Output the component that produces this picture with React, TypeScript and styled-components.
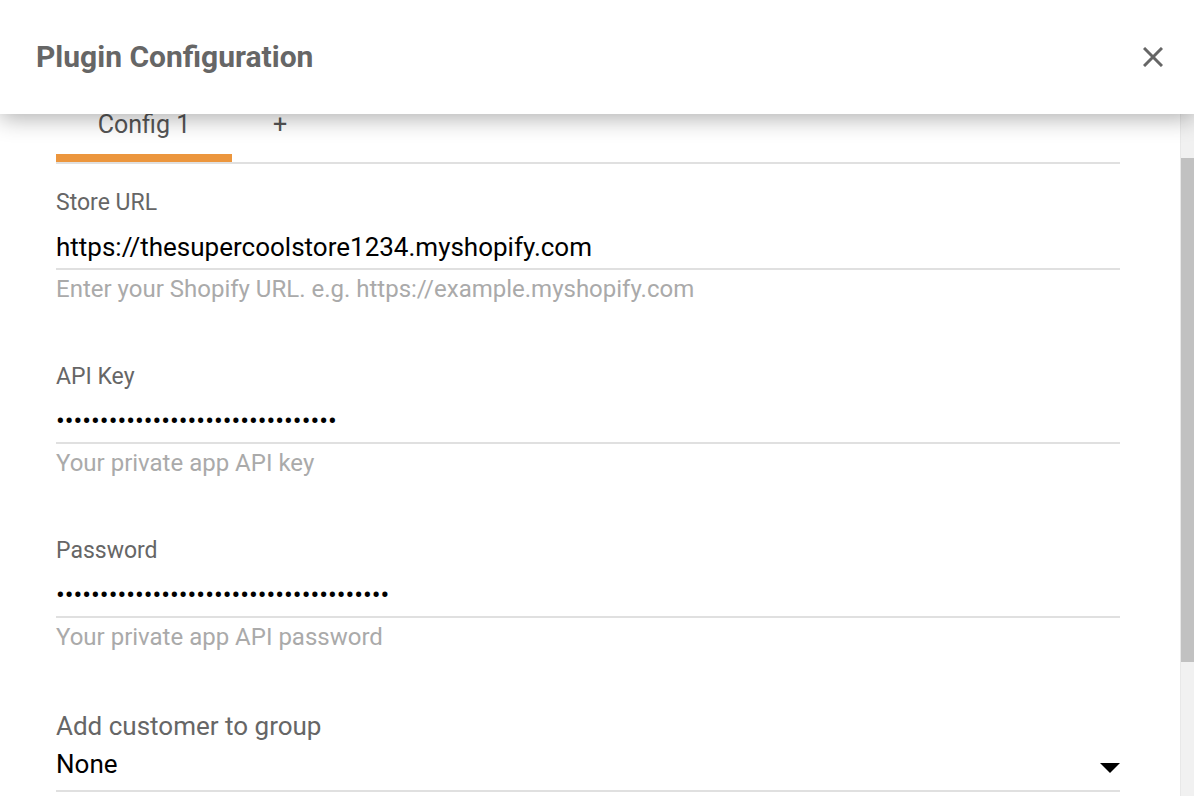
import { useLayoutEffect, useRef } from 'react';
import styled, { createGlobalStyle } from 'styled-components';

const GlobalStyle = createGlobalStyle`
  html, body {
    margin: 0;
    padding: 0;
    background: #ffffff;
    font-family: Roboto, "Liberation Sans", Arial, sans-serif;
  }
`;

const Dialog = styled.div`
  display: flex;
  flex-direction: column;
  height: 100vh;
  overflow: hidden;
  background: #ffffff;
`;

const Header = styled.header`
  position: relative;
  z-index: 1;
  flex: 0 0 114px;
  display: flex;
  align-items: center;
  justify-content: space-between;
  padding: 0 31px 0 36px;
  background: #ffffff;
  box-shadow: 0 4px 22px rgba(0, 0, 0, 0.32);
`;

const Title = styled.h1`
  margin: 0 0 2px;
  font-size: 30px;
  font-weight: 700;
  color: #666666;
`;

const CloseButton = styled.button`
  display: flex;
  align-items: center;
  justify-content: center;
  width: 20px;
  height: 20px;
  padding: 0;
  border: none;
  background: none;
  cursor: pointer;
`;

const BodyRow = styled.div`
  flex: 1;
  display: flex;
  min-height: 0;
`;

const Body = styled.div`
  flex: 1;
  overflow-y: scroll;
  scrollbar-width: none;
  padding: 40px 60px 186px 56px;

  &::-webkit-scrollbar {
    display: none;
  }
`;

const ScrollTrack = styled.div`
  flex: 0 0 14px;
  box-sizing: border-box;
  padding-top: 44px;
  background: #f1f1f1;
  border-left: 1px solid #e8e8e8;
`;

const ScrollThumb = styled.div`
  height: 504px;
  background: #c1c1c1;
`;

const TabRow = styled.div`
  display: flex;
  border-bottom: 2px solid #e0e0e0;
`;

const Tab = styled.button<{ $active?: boolean; $width: number }>`
  display: flex;
  align-items: center;
  justify-content: center;
  width: ${(p) => p.$width}px;
  height: 68px;
  padding: 0;
  border: none;
  border-bottom: 8px solid ${(p) => (p.$active ? '#ec963d' : 'transparent')};
  background: none;
  font-family: inherit;
  font-size: 25px;
  color: #555555;
  cursor: pointer;
`;

const Field = styled.div`
  display: flex;
  flex-direction: column;
  margin-top: 27px;

  & + & {
    margin-top: 64px;
  }
`;

const Label = styled.label<{ $large?: boolean }>`
  font-size: ${(p) => (p.$large ? 26 : 23)}px;
  line-height: ${(p) => (p.$large ? 26 : 24)}px;
  color: #666666;
`;

const Input = styled.input`
  box-sizing: border-box;
  width: 100%;
  height: 40px;
  margin-top: 15px;
  padding: 0 0 4px;
  border: none;
  border-bottom: 2px solid #e0e0e0;
  outline: none;
  background: transparent;
  font-family: inherit;
  font-size: 26px;
  color: #000000;
`;

const Helper = styled.div`
  margin-top: 7px;
  font-size: 24px;
  line-height: 24px;
  color: #aaaaaa;
`;

const Select = styled.div`
  box-sizing: border-box;
  display: flex;
  align-items: center;
  justify-content: space-between;
  height: 46px;
  margin-top: 7px;
  padding-bottom: 8px;
  border-bottom: 2px solid #e0e0e0;
  font-size: 26px;
  color: #000000;
  cursor: pointer;
`;

const Caret = styled.span`
  width: 0;
  height: 0;
  margin-top: 8px;
  border-left: 10px solid transparent;
  border-right: 10px solid transparent;
  border-top: 10px solid #000000;
`;

const fields = [
  {
    label: 'Store URL',
    value: 'https://thesupercoolstore1234.myshopify.com',
    helper: 'Enter your Shopify URL. e.g. https://example.myshopify.com',
  },
  { label: 'API Key', value: '•'.repeat(32), helper: 'Your private app API key' },
  { label: 'Password', value: '•'.repeat(38), helper: 'Your private app API password' },
];

export default function App() {
  const bodyRef = useRef<HTMLDivElement>(null);

  useLayoutEffect(() => {
    if (bodyRef.current) bodyRef.current.scrollTop = 60;
  }, []);

  return (
    <>
      <GlobalStyle />
      <Dialog>
        <Header>
          <Title>Plugin Configuration</Title>
          <CloseButton aria-label="Close">
            <svg width="20" height="20" viewBox="0 0 20 20">
              <path d="M1 1L19 19M19 1L1 19" stroke="#666666" strokeWidth="3" />
            </svg>
          </CloseButton>
        </Header>
        <BodyRow>
          <Body ref={bodyRef}>
            <TabRow>
              <Tab $active $width={176}>Config 1</Tab>
              <Tab $width={96}>+</Tab>
            </TabRow>
            {fields.map((f) => (
              <Field key={f.label}>
                <Label>{f.label}</Label>
                <Input readOnly value={f.value} />
                <Helper>{f.helper}</Helper>
              </Field>
            ))}
            <Field>
              <Label $large>Add customer to group</Label>
              <Select>
                <span>None</span>
                <Caret />
              </Select>
            </Field>
          </Body>
          <ScrollTrack>
            <ScrollThumb />
          </ScrollTrack>
        </BodyRow>
      </Dialog>
    </>
  );
}
